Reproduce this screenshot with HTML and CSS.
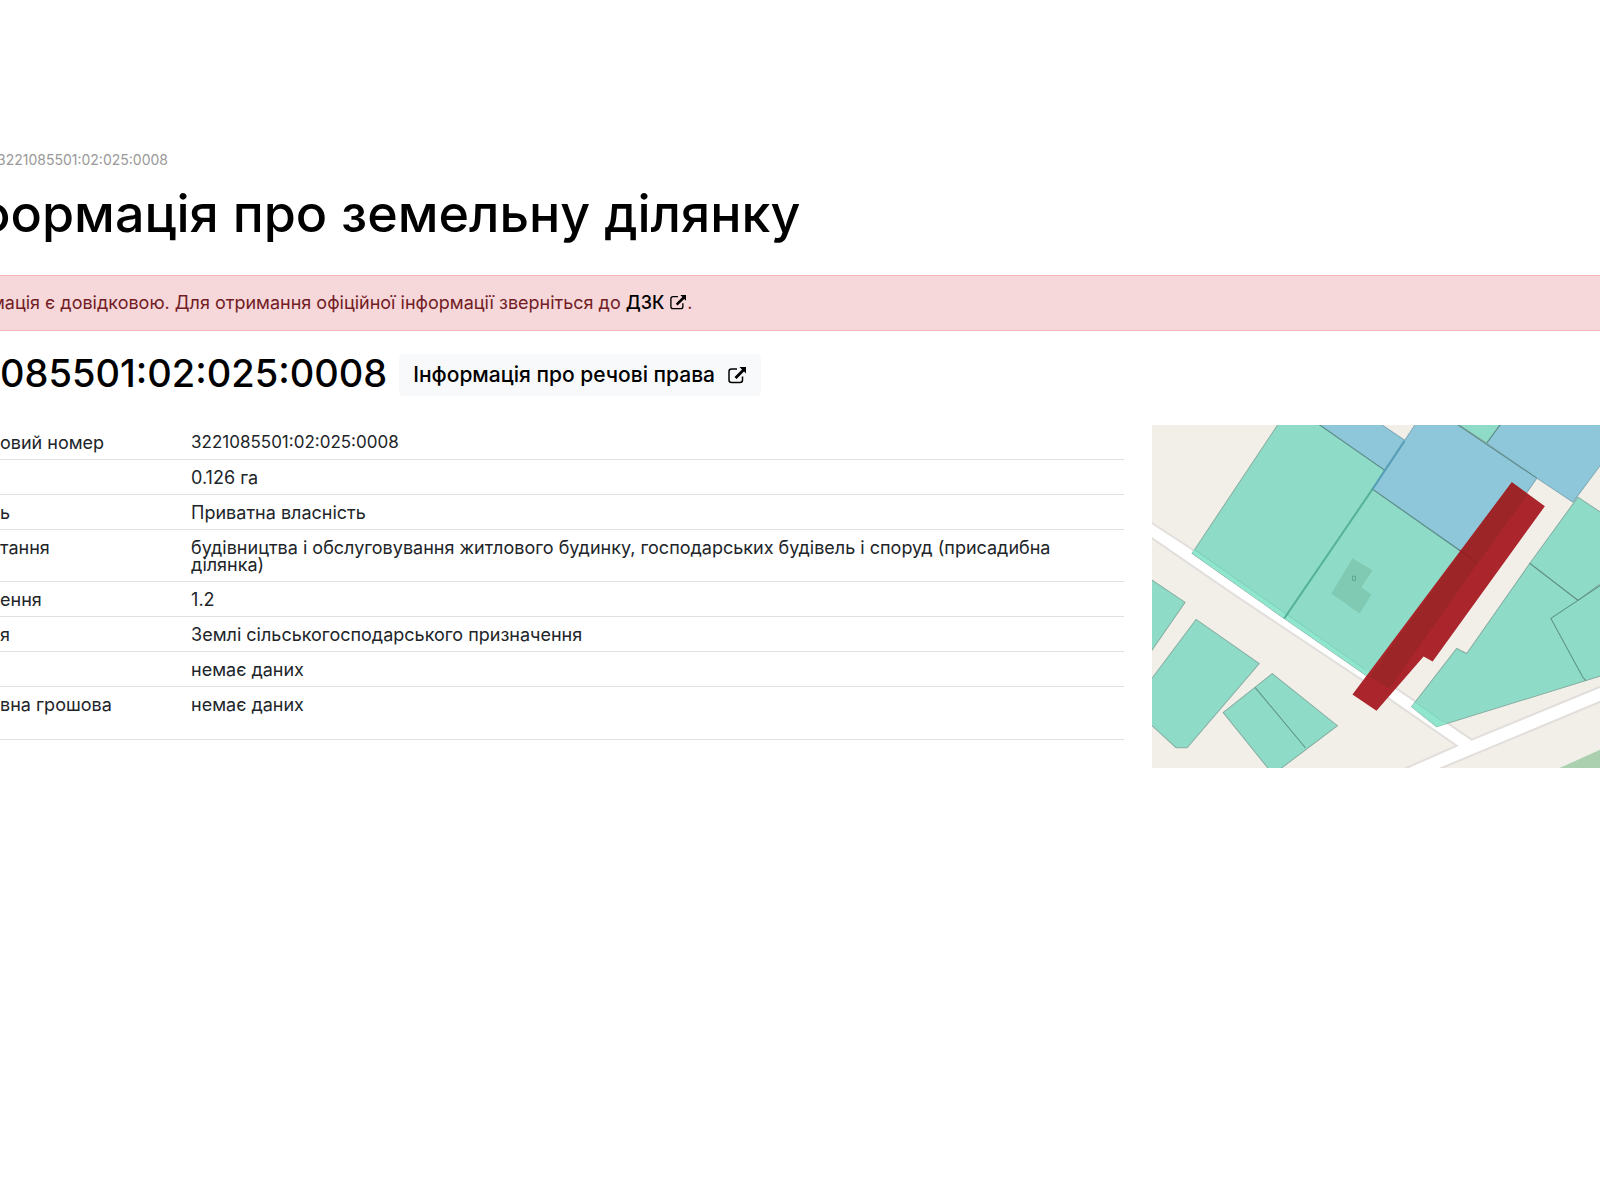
FILE: index.html
```html
<!DOCTYPE html>
<html lang="uk">
<head>
  <meta charset="utf-8">
  <title>Інформація про земельну ділянку</title>
  <link rel="stylesheet" href="styles.css">
</head>
<body>
  <svg class="sprite" aria-hidden="true">
    <symbol id="external" viewBox="0 0 20 18">
      <path d="M10 3H4.500Q2 3 2 5.500V14Q2 16.500 4.500 16.500H13Q15.500 16.500 15.500 14V10.500" fill="none" stroke="currentColor" stroke-width="1.500"/>
      <path d="M12.500 1H19V7.500L17 5.500 9.500 13 7.500 11 15 3.500Z" fill="currentColor"/>
    </symbol>
  </svg>
  <main class="page">
    <nav class="crumbs" aria-label="Навігація">3221085501:02:025:0008</nav>
    <h1 class="title">формація про земельну ділянку</h1>
    <div class="alert" role="alert">мація є довідковою. Для отримання офіційної інформації зверніться до <a class="alert-link" href="#">ДЗК <svg class="icon icon-small" aria-hidden="true"><use href="#external"/></svg></a>.</div>
    <div class="parcel-head">
      <h2 class="number">085501:02:025:0008</h2>
      <a class="rights" href="#">Інформація про речові права <svg class="icon" aria-hidden="true"><use href="#external"/></svg></a>
    </div>
    <div class="parcel">
      <table class="facts">
        <tr><th scope="row">овий номер</th><td class="digits">3221085501:02:025:0008</td></tr>
        <tr><th scope="row"></th><td>0.126 га</td></tr>
        <tr><th scope="row">ь</th><td>Приватна власність</td></tr>
        <tr><th scope="row">тання</th><td>будівництва і обслуговування житлового будинку, господарських будівель і споруд (присадибна ділянка)</td></tr>
        <tr><th scope="row">ення</th><td>1.2</td></tr>
        <tr><th scope="row">я</th><td>Землі сільськогосподарського призначення</td></tr>
        <tr><th scope="row"></th><td>немає даних</td></tr>
        <tr class="tall"><th scope="row">вна грошова</th><td>немає даних</td></tr>
      </table>
      <svg class="map" viewBox="0 0 447 342" preserveAspectRatio="xMinYMin slice" role="img" aria-label="Ділянка на карті">
        <rect width="447" height="343" fill="#f2efe9"/>
        <path d="M-3 96L40 124 244 263 319 314 450 260V275L287 343 284 348H240L252 343 304 320 209 254 80 168-3 111Z" fill="#fff" stroke="#e1dedb" stroke-width="2"/>
        <path d="M405 343L447 324V343Z" fill="#aad0b0"/>
        <g fill="#8edcc7" stroke="#86aea3" stroke-width="1">
          <path d="M126-1L40 128 132 193 220 64 232 45 166-1Z"/>
          <path d="M220 64L132 193 224 257 325 138Z"/>
          <path d="M305-1L334 18 348-1Z"/>
          <path d="M425 72L377 138 425 175 449 159V88Z"/>
          <path d="M377 138L314 228 304 223 259 281 284 301 433 255 449 250V157L425 175Z"/>
          <path d="M-1 154L33 177-1 226Z"/>
          <path d="M44 194L107 238 35 322H24L-1 299V254Z"/>
          <path d="M120 248L185 300 127 344H117L71 287Z"/>
        </g>
        <g fill="#8ec7da" stroke="#7fa9b6" stroke-width="1">
          <path d="M166-1L232 45 252 15 228-1Z"/>
          <path d="M263-1L220 64 325 138 384 53 304-1Z"/>
          <path d="M348-1L334 18 384 53 420 77 449 38V-1Z"/>
        </g>
        <path d="M444-1L449 3V-1Z" fill="#8edcc7"/>
        <path d="M40 128L132 193 224 257 226 253 42 124ZM259 281L284 301 294 298 263 276Z" fill="#8fe6cd"/>
        <path d="M42 124L213 244M262 276L292 297" stroke="#80d1bb" fill="none"/>
        <path d="M200 133L220 145 209 162 219 169 207 188 179 168Z" fill="#80c9b3"/>
        <path d="M200 151h3v4h-3Z" fill="none" stroke="#62a694"/>
        <path d="M132 193L220 64" stroke="#55b399" stroke-width="2"/>
        <path d="M220 64L252 16" stroke="#559fb8" stroke-width="2"/>
        <g stroke="#5b8f88" stroke-width="1" fill="none">
          <path d="M103 262L153 322M377 138L425 175 449 159M425 175L398 193 430 252 433 255"/>
          <path d="M166-1L232 45M220 64L307 125M304-1L384 53M334 18L348-1"/>
        </g>
        <path d="M359 57L392 81 280 236 271 231 224 285 200 269Z" fill="#aa262c"/>
        <path d="M359 57L375 69 325 138 237 263 217 251Z" fill="#9c2527"/>
        <path d="M307 125L325 138" stroke="#8f2022"/>
      </svg>
    </div>
  </main>
</body>
</html>
```
FILE: styles.css
```css
* { box-sizing: border-box; }

body {
  margin: 0;
  background: #fff;
  color: #212529;
  font: 18px/24px Inter, "Noto Sans", sans-serif;
}

.sprite { display: none; }

.page {
  padding-top: 148px;
  overflow: hidden;
}

.crumbs {
  color: #999;
  font-size: 14px;
  text-indent: -3px;
}

.title {
  margin: 6px 0 26px;
  color: #000;
  font-size: 52px;
  font-weight: 500;
  line-height: 71px;
  text-indent: -27px;
  white-space: nowrap;
}

.alert {
  padding: 15px 0;
  border: solid #f5b3bc;
  border-width: 1px 0;
  background: #f6d7da;
  color: #721c24;
  text-indent: -9px;
}

.alert-link {
  color: #000;
  font-weight: 500;
  text-decoration: none;
}

.icon {
  width: 20px;
  height: 18px;
  margin-left: 6px;
  vertical-align: -2px;
}

.icon-small {
  width: 18px;
  height: 16px;
  margin-left: 0;
  vertical-align: -1px;
}

.parcel-head {
  display: flex;
  align-items: flex-start;
  gap: 12px;
  padding: 23px 0 29px;
}

.number {
  margin: 0;
  color: #000;
  font-size: 38px;
  font-weight: 500;
  line-height: 38px;
}

.rights {
  padding: 9px 14px;
  border-radius: 4px;
  background: #f8f9fa;
  color: #000;
  font-size: 21px;
  font-weight: 500;
  text-decoration: none;
}

.parcel {
  display: grid;
  grid-template-columns: minmax(0, 1fr) 28%;
  gap: 28px;
  align-items: start;
}

.facts {
  width: 100%;
  border-collapse: collapse;
  table-layout: fixed;
  line-height: 17px;
}

.facts th,
.facts td {
  padding: 9px 0 8px;
  border-bottom: 1px solid #dee2e6;
  font-weight: 400;
  text-align: left;
  vertical-align: top;
}

.facts th { width: 17%; }

.facts .digits { font-size: 17px; }

.facts .tall { height: 53px; }

.map {
  display: block;
  width: 100%;
}
```
